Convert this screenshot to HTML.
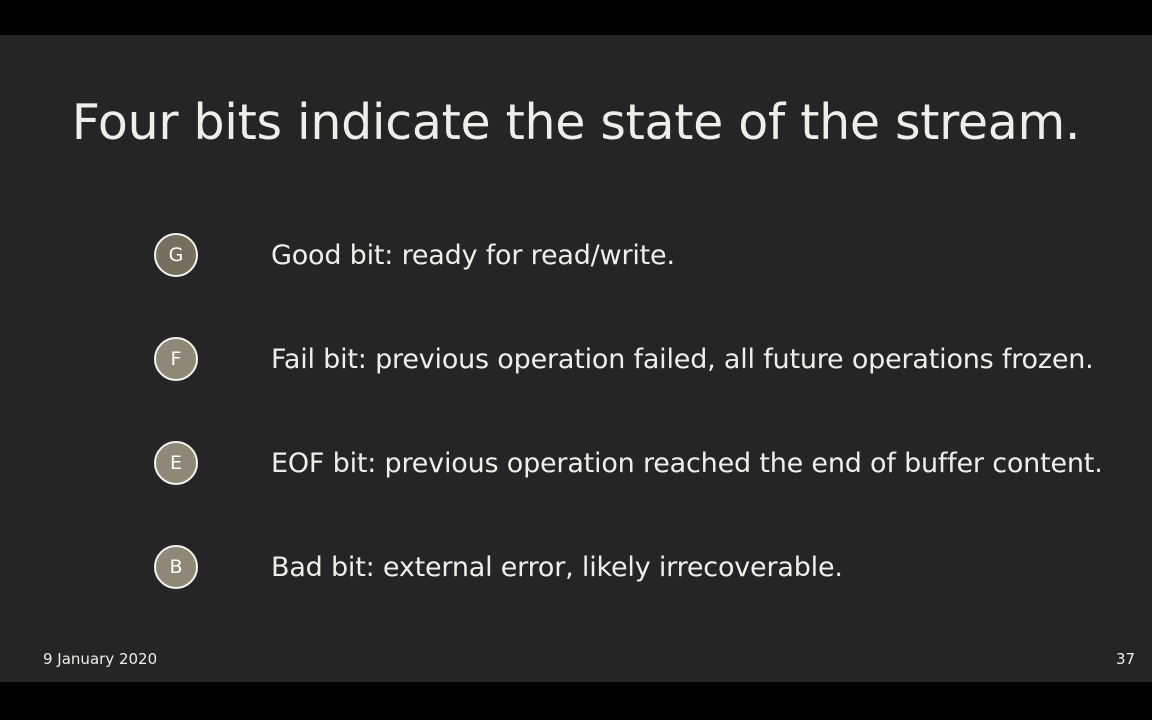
<!DOCTYPE html>
<html><head><meta charset="utf-8"><style>
html,body{margin:0;padding:0;width:1152px;height:720px;background:#000;overflow:hidden}
.slide{position:absolute;left:0;top:35px;width:1152px;height:647px;background:#252525;font-family:"DejaVu Sans","Liberation Sans",sans-serif;color:#efefea}
.title{position:absolute;left:0;width:1152px;text-align:center;top:59px;font-size:49px;white-space:nowrap;letter-spacing:-0.3px}
.row{position:absolute;left:0;width:1152px;height:50px}
.c{position:absolute;left:154px;top:0;width:40px;height:40px;border:2px solid #f2f2ee;border-radius:50%;background:#8e8877;color:#fff;font-size:19px;line-height:41px;text-align:center}
.t{position:absolute;left:271px;top:7px;font-size:27px;white-space:nowrap;letter-spacing:-0.2px}
.foot{position:absolute;top:615px;font-size:15px}
</style></head><body><div class="slide">
<div class="title">Four bits indicate the state of the stream.</div>
<div class="row" style="top:198px"><div class="c" style="background:#766f5e">G</div><div class="t">Good bit: ready for read/write.</div></div>
<div class="row" style="top:302px"><div class="c">F</div><div class="t">Fail bit: previous operation failed, all future operations frozen.</div></div>
<div class="row" style="top:406px"><div class="c">E</div><div class="t">EOF bit: previous operation reached the end of buffer content.</div></div>
<div class="row" style="top:510px"><div class="c">B</div><div class="t">Bad bit: external error, likely irrecoverable.</div></div>
<div class="foot" style="left:43px">9 January 2020</div>
<div class="foot" style="left:1116px">37</div>
</div></body></html>
